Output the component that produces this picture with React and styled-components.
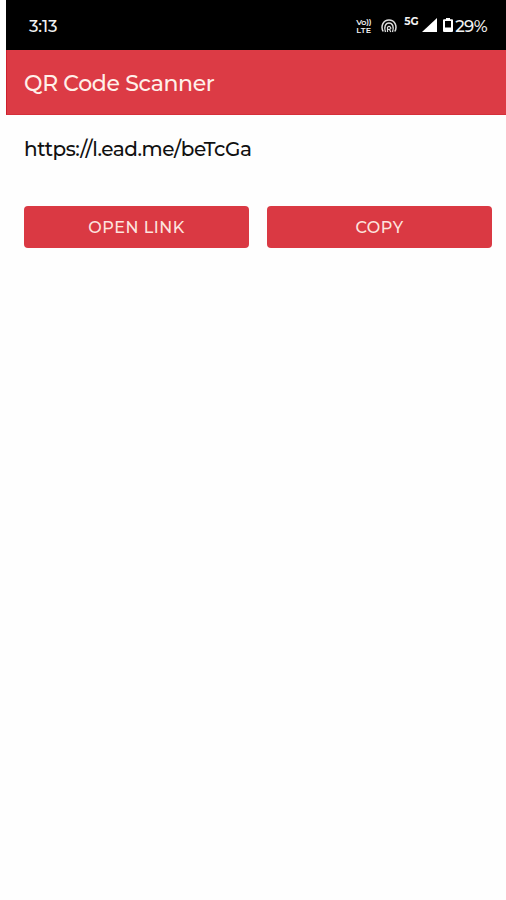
import React from "react";
import styled, { createGlobalStyle } from "styled-components";

const GlobalStyle = createGlobalStyle`
  * {
    box-sizing: border-box;
  }

  body {
    margin: 0;
    background: #fefefe;
    font-family: "Montserrat", "Inter", sans-serif;
  }
`;

const Screen = styled.div`
  min-height: 900px;
  padding-left: 6px;
  overflow: hidden;
`;

const StatusBar = styled.div`
  display: flex;
  align-items: center;
  justify-content: space-between;
  height: 50px;
  padding: 1px 19px 0 23px;
  background: #000;
  color: #f2f2f2;
`;

const Time = styled.span`
  font-size: 16.5px;
  font-weight: 500;
  letter-spacing: -0.1px;
`;

const StatusIcons = styled.div`
  display: flex;
  align-items: center;
`;

const Volte = styled.div`
  display: flex;
  flex-direction: column;
  width: 17px;
  margin-right: 8px;
  font-size: 8px;
  font-weight: 600;
  line-height: 8px;
`;

const VolteLine = styled.span`
  display: block;
  height: 8px;
  white-space: nowrap;
  letter-spacing: ${({ $spacing }) => $spacing};
`;

const Network = styled.span`
  width: 15px;
  margin: -8px 3px 0 7px;
  font-size: 10.5px;
  font-weight: 700;
  line-height: 12px;
  letter-spacing: -0.1px;
`;

const Battery = styled.span`
  margin-left: 2px;
  font-size: 16.5px;
  font-weight: 500;
  letter-spacing: -0.6px;
`;

// Signal and battery share a row with a fixed gap
const Glyphs = styled.div`
  display: flex;
  gap: 6px;
  margin-top: -1px;
`;

const AppBar = styled.header`
  display: flex;
  align-items: center;
  height: 65px;
  padding: 3px 17px 0;
  background: #dc3b45;
  border-left: 1px solid #cc1f2c;
  border-bottom: 1px solid #d52f3a;
`;

const Title = styled.h1`
  margin: 0;
  color: #fff0e9;
  font-size: 22px;
  font-weight: 500;
  letter-spacing: -0.35px;
`;

const Content = styled.main`
  padding: 20px 14px 0 18px;
`;

const Link = styled.p`
  margin: 0;
  color: #111;
  font-size: 20px;
  font-weight: 500;
  line-height: 28px;
  letter-spacing: -0.45px;
`;

const Actions = styled.div`
  display: grid;
  grid-template-columns: 1fr 1fr;
  gap: 18px;
  margin-top: 43px;
`;

const Button = styled.button`
  height: 42px;
  padding: 1px 0 0;
  border: 0;
  border-radius: 4px;
  background: #da3943;
  color: #fde4df;
  font-family: inherit;
  font-size: 16px;
  font-weight: 500;
  letter-spacing: 0.5px;
`;

const HotspotIcon = () => (
  <svg width="16" height="14" viewBox="0 0 16 14" fill="none" stroke="#dedede">
    <path d="M2.2 12.5C-.8 7 2.5 1 8 1s8.8 6 5.8 11.5" strokeWidth="1.5" />
    <path d="M4.5 13C2.6 8 4.5 4 8 4s5.4 4 3.5 9" strokeWidth="1.4" />
    <path
      d="M6.5 13V8.3q1.5-2 3 0T6.8 10.5M8.5 10.5l1.3 2.5"
      strokeWidth="1.2"
    />
  </svg>
);

const SignalIcon = () => (
  <svg width="15" height="14" viewBox="0 0 15 14">
    <path d="M15 0v14H0z" fill="#fff" />
  </svg>
);

const BatteryIcon = () => (
  <svg width="10" height="14" viewBox="0 0 10 14" fill="#fff">
    <path d="M3 0h4v1.2h2q1 0 1 1V13q0 1-1 1H1q-1 0-1-1V2.200q0-1 1-1h2z" />
    <path d="M2 3h6v6.500H2z" fill="#000" />
  </svg>
);

const App = () => {
  return (
    <Screen>
      <GlobalStyle />
      <StatusBar>
        <Time>3:13</Time>
        <StatusIcons>
          <Volte>
            <VolteLine $spacing="-0.3px">Vo))</VolteLine>
            <VolteLine $spacing="0.2px">LTE</VolteLine>
          </Volte>
          <HotspotIcon />
          <Network>5G</Network>
          <Glyphs>
            <SignalIcon />
            <BatteryIcon />
          </Glyphs>
          <Battery>29%</Battery>
        </StatusIcons>
      </StatusBar>
      <AppBar>
        <Title>QR Code Scanner</Title>
      </AppBar>
      <Content>
        <Link>https://l.ead.me/beTcGa</Link>
        <Actions>
          <Button>OPEN LINK</Button>
          <Button>COPY</Button>
        </Actions>
      </Content>
    </Screen>
  );
};

export default App;
